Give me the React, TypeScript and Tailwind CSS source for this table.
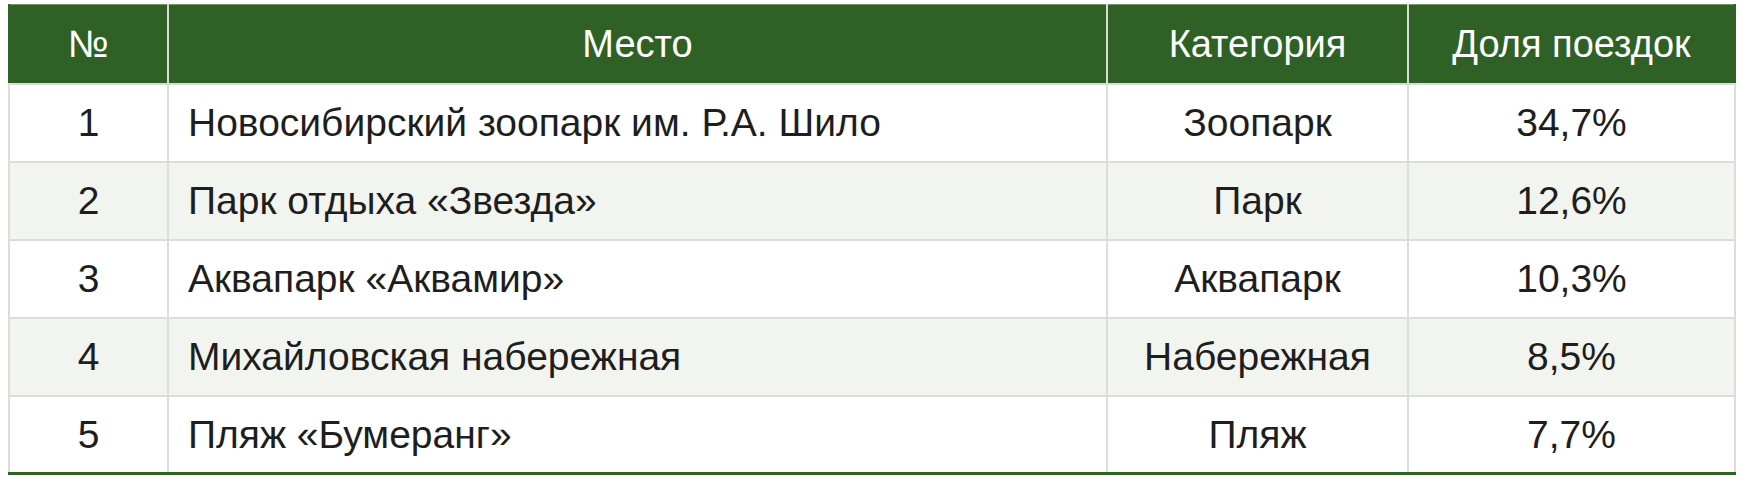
import React from "react";

interface Row {
  n: number;
  place: string;
  category: string;
  share: string;
}

const rows: Row[] = [
  { n: 1, place: "Новосибирский зоопарк им. Р.А. Шило", category: "Зоопарк", share: "34,7%" },
  { n: 2, place: "Парк отдыха «Звезда»", category: "Парк", share: "12,6%" },
  { n: 3, place: "Аквапарк «Аквамир»", category: "Аквапарк", share: "10,3%" },
  { n: 4, place: "Михайловская набережная", category: "Набережная", share: "8,5%" },
  { n: 5, place: "Пляж «Бумеранг»", category: "Пляж", share: "7,7%" },
];

const App: React.FC = () => {
  return (
    <div className="min-h-screen bg-white pl-2 pt-1 font-['Liberation_Sans',Arial,sans-serif]">
      <table className="w-[1726px] table-fixed border-collapse border-t border-t-[#6f9a63] border-b-[3px] border-b-[#2f6127] leading-none">
        <colgroup>
          <col className="w-[159px]" />
          <col className="w-[939px]" />
          <col className="w-[301px]" />
          <col className="w-[327px]" />
        </colgroup>
        <thead>
          <tr className="h-[79px] bg-[#2f6127] text-[38px] text-white">
            <th className="border-x-2 border-b-2 border-[#d9dcd6] border-l-[#2f6127] font-normal">№</th>
            <th className="border-x-2 border-b-2 border-[#d9dcd6] font-normal">Место</th>
            <th className="border-x-2 border-b-2 border-[#d9dcd6] font-normal">Категория</th>
            <th className="border-x-2 border-b-2 border-[#d9dcd6] border-r-[#2f6127] font-normal">Доля поездок</th>
          </tr>
        </thead>
        <tbody className="text-[39px] text-[#1e1e1e]">
          {rows.map((r, i) => (
            <tr key={r.n} className={`h-[78px] ${i % 2 === 1 ? "bg-[#f2f4ef]" : "bg-white"}`}>
              <td className="border-2 border-[#dcdcd8] text-center">{r.n}</td>
              <td className="border-2 border-[#dcdcd8] pl-[19px]">{r.place}</td>
              <td className="border-2 border-[#dcdcd8] text-center">{r.category}</td>
              <td className="border-2 border-[#dcdcd8] text-center">{r.share}</td>
            </tr>
          ))}
        </tbody>
      </table>
    </div>
  );
};

export default App;
